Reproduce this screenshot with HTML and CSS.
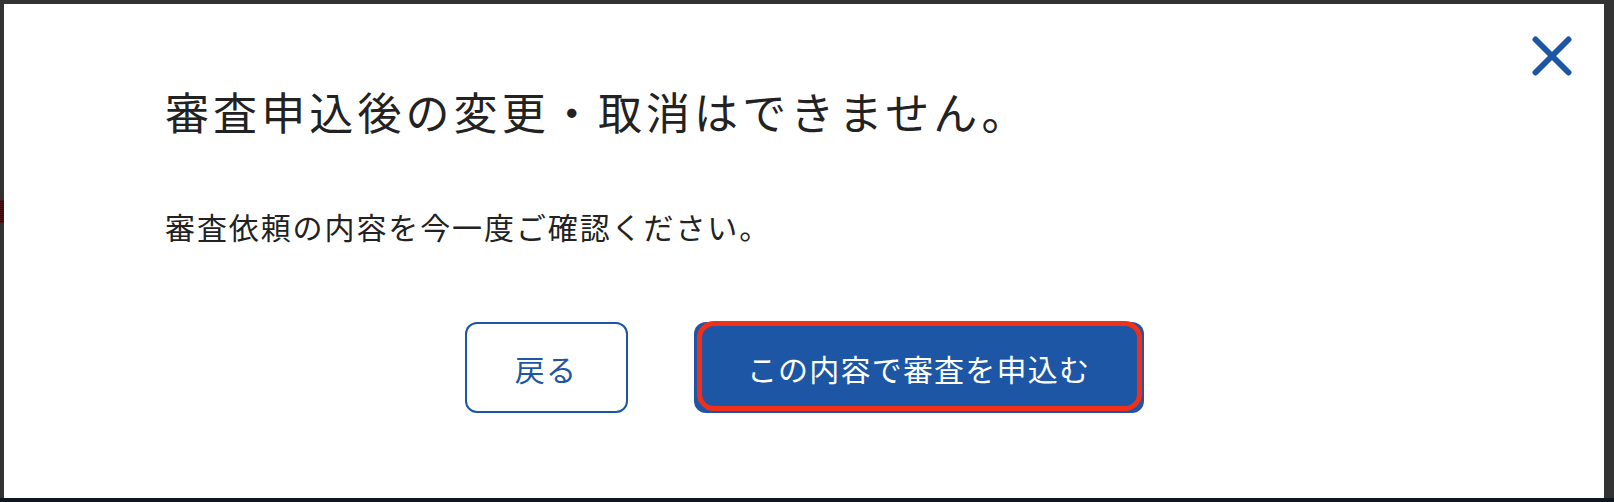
FILE: index.html
```html
<!DOCTYPE html>
<html lang="ja">
<head>
<meta charset="utf-8">
<title>審査申込確認</title>
<link rel="stylesheet" href="styles.css">
</head>
<body>
<div class="screen">
  <div class="main">
    <div class="gutter"><div class="gutter-mark"></div></div>
    <div class="dialog">
      <button class="close" type="button" aria-label="閉じる">
        <svg width="40" height="40" viewBox="0 0 40 40"><path d="M3.5 3.5 L36.5 36.5 M36.5 3.5 L3.5 36.5" stroke="#1d56a5" stroke-width="6" stroke-linecap="round" fill="none"/></svg>
      </button>
      <h1 class="title">審査申込後の変更・取消はできません。</h1>
      <p class="message">審査依頼の内容を今一度ご確認ください。</p>
      <div class="actions">
        <button class="btn btn-back" type="button">戻る</button>
        <button class="btn btn-submit" type="button">この内容で審査を申込む</button>
      </div>
    </div>
    <div class="gutter-right"></div>
  </div>
  <div class="bottom-bar"></div>
</div>
</body>
</html>
```
FILE: styles.css
```css
* { box-sizing: border-box; }
html, body { margin: 0; padding: 0; }
body {
  background: #333333;
  font-family: "Noto Sans CJK JP", "Noto Sans", sans-serif;
  width: 1614px;
  height: 502px;
  overflow: hidden;
}
.screen {
  display: flex;
  flex-direction: column;
  height: 502px;
}
.main {
  flex: 1;
  display: flex;
  padding-top: 4px;
}
.gutter {
  width: 4px;
  padding-top: 196px;
  background: #323232;
}
.gutter-mark {
  height: 23px;
  background: repeating-linear-gradient(to bottom, #4a1416 0, #4a1416 1px, #2a1012 1px, #2a1012 2px);
}
.gutter-right {
  width: 10px;
  background: #333333;
}
.bottom-bar {
  height: 4px;
  background: #0c1722;
}
.dialog {
  position: relative;
  flex: 1;
  background: #ffffff;
  padding: 85px 0 0 161px;
}
.close {
  position: absolute;
  top: 32px;
  right: 32px;
  width: 40px;
  height: 40px;
  padding: 0;
  border: 0;
  background: none;
  display: block;
}
.close svg { display: block; }
.title {
  margin: 0;
  font-size: 44px;
  line-height: 44px;
  font-weight: 400;
  letter-spacing: 4.1px;
  color: #222222;
}
.message {
  margin: 78px 0 0;
  font-size: 30px;
  line-height: 30px;
  letter-spacing: 1.9px;
  color: #222222;
}
.actions {
  margin: 81px 0 0 -161px;
  display: flex;
  justify-content: center;
  gap: 66px;
}
.btn {
  height: 91px;
  border-radius: 12px;
  font-family: "Noto Sans CJK JP", "Noto Sans", sans-serif;
  font-size: 30px;
  letter-spacing: 1.2px;
  padding: 0;
  display: flex;
  align-items: center;
  justify-content: center;
}
.btn-back {
  width: 163px;
  background: #ffffff;
  border: 2px solid #1d56a5;
  color: #1d56a5;
}
.btn-submit {
  position: relative;
  width: 450px;
  background: #1d56a5;
  border: 0;
  color: #ffffff;
}
.btn-submit::after {
  content: "";
  position: absolute;
  left: 3px;
  top: -1px;
  right: 2px;
  bottom: 2px;
  border: 5px solid #f2301a;
  border-radius: 17px;
}
```
